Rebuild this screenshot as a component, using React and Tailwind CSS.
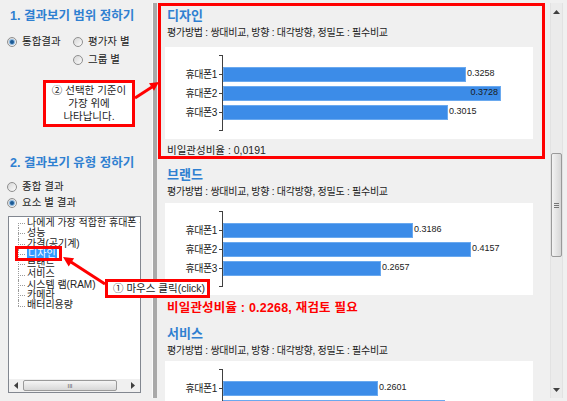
import React from 'react';

const design = [
  { label: '휴대폰1', value: 0.3258 },
  { label: '휴대폰2', value: 0.3728, inside: true },
  { label: '휴대폰3', value: 0.3015 },
];
const brand = [
  { label: '휴대폰1', value: 0.3186 },
  { label: '휴대폰2', value: 0.4157 },
  { label: '휴대폰3', value: 0.2657 },
];
const service = [
  { label: '휴대폰1', value: 0.2601 },
  { label: '휴대폰2', value: 0.3722 },
  { label: '휴대폰3', value: 0.3677 },
];

const treeItems = ['나에게 가장 적합한 휴대폰 선택', '성능', '가격(공기계)', '디자인', '브랜드', '서비스', '시스템 램(RAM)', '카메라', '배터리용량'];

const Radio = ({ checked }) => (
  <span className="flex h-[10px] w-[10px] shrink-0 items-center justify-center rounded-full border border-[#8f8f8f] bg-gradient-to-br from-[#d6d6d6] to-[#fcfcfc]">
    {checked && <span className="h-[4px] w-[4px] rounded-full bg-[#1c5a94] ring-1 ring-[#8cb8e0]" />}
  </span>
);

const Arrow = ({ dir }) => (
  <svg width="7" height="4" viewBox="0 0 7 4">
    {dir === 'up' && <polygon points="3.5,0 7,4 0,4" fill="#404040" />}
    {dir === 'down' && <polygon points="0,0 7,0 3.5,4" fill="#404040" />}
  </svg>
);

const ArrowH = ({ dir }) => (
  <svg width="4" height="7" viewBox="0 0 4 7">
    {dir === 'left' && <polygon points="0,3.5 4,0 4,7" fill="#404040" />}
    {dir === 'right' && <polygon points="0,0 4,3.5 0,7" fill="#404040" />}
  </svg>
);

const Chart = ({ rows, scale }) => (
  <div className="flex h-[92px] items-center bg-white">
    <div className="flex w-[52px] flex-col gap-[4px]">
      {rows.map((r) => (
        <div key={r.label} className="h-[15px] text-right text-[10px] leading-[15px] tracking-[-0.4px] text-[#222]">
          {r.label}
        </div>
      ))}
    </div>
    <div className="ml-[2px] flex h-[76px] w-[4px] flex-col justify-center gap-[4px] border-y border-r border-[#404040]">
      {rows.map((r) => (
        <div key={r.label} className="flex h-[15px] items-center">
          <div className="h-px w-full bg-[#404040]" />
        </div>
      ))}
    </div>
    <div className="flex flex-col gap-[4px]">
      {rows.map((r) => (
        <div key={r.label} className="flex h-[15px] items-center">
          <div
            className="flex h-[15px] items-center justify-end border border-[#6aa9ef] bg-[#3c8ce8] pr-[2px]"
            style={{ width: Math.round(r.value * scale) }}
          >
            {r.inside && <span className="text-[9px] text-[#1a1a1a]">{r.value.toFixed(4)}</span>}
          </div>
          {!r.inside && <span className="ml-[1px] text-[9px] text-[#222]">{r.value.toFixed(4)}</span>}
        </div>
      ))}
    </div>
  </div>
);

const Method = ({ className }) => (
  <div className={`ml-[2px] h-[14px] whitespace-nowrap text-[10px] leading-[14px] tracking-[-0.25px] text-[#222] ${className}`}>
    평가방법 : 쌍대비교, 방향 : 대각방향, 정밀도 : 필수비교
  </div>
);

export default function App() {
  return (
    <div className="relative flex h-[401px] w-[567px] overflow-hidden bg-[#f0f0f0] font-['Liberation_Sans','Noto_Sans_CJK_KR',sans-serif] text-[#222]">
      {/* left panel */}
      <div className="flex w-[152px] flex-col">
        <div className="mt-[8px] h-[16px] whitespace-nowrap pl-[10px] text-[12.5px] font-bold leading-[16px] text-[#2f80d1]">1. 결과보기 범위 정하기</div>
        <div className="mt-[10px] flex h-[16px] items-center pl-[7px] text-[10.5px]">
          <div className="flex w-[66px] items-center gap-[5px]">
            <Radio checked />
            <span>통합결과</span>
          </div>
          <div className="flex items-center gap-[5px]">
            <Radio />
            <span>평가자 별</span>
          </div>
        </div>
        <div className="mt-[2px] flex h-[16px] items-center gap-[5px] pl-[73px] text-[10.5px]">
          <Radio />
          <span>그룹 별</span>
        </div>

        <div className="mt-[87px] h-[16px] whitespace-nowrap pl-[10px] text-[12.5px] font-bold leading-[16px] text-[#2f80d1]">2. 결과보기 유형 정하기</div>
        <div className="mt-[8px] flex h-[16px] items-center gap-[5px] pl-[7px] text-[10.5px]">
          <Radio />
          <span>종합 결과</span>
        </div>
        <div className="flex h-[16px] items-center gap-[5px] pl-[7px] text-[10.5px]">
          <Radio checked />
          <span>요소 별 결과</span>
        </div>

        <div className="ml-[8px] mt-[5px] flex h-[177px] w-[133px] flex-col border border-[#828790] bg-white">
          <div className="overflow-hidden pl-[9px] pt-[1px]">
            {treeItems.map((t, i) => (
              <div key={t} className="flex h-[10.3px] items-center whitespace-nowrap text-[10px] leading-[10.3px]">
                <div className="relative h-full w-[7px] shrink-0">
                  <span
                    className={`absolute left-0 border-l border-dotted border-[#9a9a9a] ${
                      i === 0 ? 'top-1/2 bottom-0' : i === treeItems.length - 1 ? 'top-0 h-1/2' : 'top-0 bottom-0'
                    }`}
                  />
                  <span className="absolute left-0 top-1/2 w-full border-t border-dotted border-[#9a9a9a]" />
                </div>
                <span className={`ml-[2px] ${t === '디자인' ? 'bg-[#3399ff] px-[1px] text-white' : ''}`}>{t}</span>
              </div>
            ))}
          </div>
          <div className="mt-auto flex h-[13px] items-center bg-[#f0f0f0]">
            <div className="flex h-full w-[14px] items-center justify-center">
              <ArrowH dir="left" />
            </div>
            <div className="flex h-[11px] w-[94px] items-center justify-center rounded-[2px] border border-[#9a9a9a] bg-gradient-to-b from-[#f5f5f5] to-[#d8d8d8] text-[6px] leading-none text-[#555]">
              III
            </div>
            <div className="ml-auto flex h-full w-[14px] items-center justify-center">
              <ArrowH dir="right" />
            </div>
          </div>
        </div>
      </div>

      {/* splitter */}
      <div className="my-[3px] w-[5px] border-l border-[#fafafa] bg-[#a9a9a9]" />

      {/* right panel */}
      <div className="flex h-full w-[393px] flex-col overflow-hidden pl-[1px] pt-[3px]">
        <div className="w-[387px] shrink-0 border-[3px] border-[#ff0000] pl-[4px] pr-[9px]">
          <div className="ml-[2px] mt-[1px] h-[18px] text-[13px] font-bold leading-[18px] text-[#2f80d1]">디자인</div>
          <Method className="mt-[1px]" />
          <div className="mt-[7px]">
            <Chart rows={design} scale={745} />
          </div>
          <div className="ml-[2px] mt-[5px] h-[12px] text-[10.5px] leading-[12px]">비일관성비율 : 0,0191</div>
        </div>

        <div className="w-[387px] shrink-0 pl-[7px] pr-[12px]">
          <div className="ml-[2px] mt-[7px] h-[18px] text-[13px] font-bold leading-[18px] text-[#2f80d1]">브랜드</div>
          <Method className="mt-[1px]" />
          <div className="mt-[4px]">
            <Chart rows={brand} scale={596} />
          </div>
          <div className="ml-[2px] mt-[5px] h-[16px] whitespace-nowrap text-[12.5px] font-bold leading-[16px] tracking-[0.2px] text-[#ff0000]">
            비일관성비율 : 0.2268, 재검토 필요
          </div>
        </div>

        <div className="w-[387px] shrink-0 pl-[7px] pr-[12px]">
          <div className="ml-[2px] mt-[9px] h-[18px] text-[13px] font-bold leading-[18px] text-[#2f80d1]">서비스</div>
          <Method className="mt-[1px]" />
          <div className="mt-[3px]">
            <Chart rows={service} scale={596} />
          </div>
        </div>
      </div>

      {/* vertical scrollbar */}
      <div className="mt-[3px] flex h-[395px] w-[13px] flex-col border-x border-[#e2e2e2] bg-[#ebebeb]">
        <div className="flex h-[17px] items-center justify-center">
          <Arrow dir="up" />
        </div>
        <div className="mx-auto mt-[133px] flex h-[104px] w-[11px] flex-col items-center justify-center gap-[1px] rounded-[2px] border border-[#9a9a9a] bg-gradient-to-r from-[#f3f3f3] to-[#d6d6d6]">
          <span className="h-px w-[5px] bg-[#777]" />
          <span className="h-px w-[5px] bg-[#777]" />
          <span className="h-px w-[5px] bg-[#777]" />
        </div>
        <div className="mt-auto flex h-[17px] items-center justify-center">
          <Arrow dir="down" />
        </div>
      </div>

      {/* annotations */}
      <svg className="pointer-events-none absolute inset-0" width="567" height="401">
        <line x1="135" y1="98" x2="152" y2="87" stroke="#ff0000" strokeWidth="3" />
        <polygon points="159,82 154,90.7 149,83.3" fill="#ff0000" />
        <line x1="105" y1="284" x2="71" y2="262" stroke="#ff0000" strokeWidth="3" />
        <polygon points="63,257 74.1,258.2 68.7,266.6" fill="#ff0000" />
      </svg>
      <div className="absolute left-[43px] top-[80px] flex h-[47px] w-[92px] flex-col items-center justify-center border-[3px] border-[#ff0000] bg-white text-[10.5px] leading-[13px]">
        <span>② 선택한 기준이</span>
        <span>가장 위에</span>
        <span>나타납니다.</span>
      </div>
      <div className="absolute left-[15px] top-[246px] h-[15px] w-[47px] border-[3px] border-[#ff0000]" />
      <div className="absolute left-[105px] top-[279px] flex h-[19px] w-[105px] items-center whitespace-nowrap border-[3px] border-[#ff0000] bg-white pl-[5px] text-[10.5px]">
        ① 마우스 클릭(click)
      </div>
    </div>
  );
}
